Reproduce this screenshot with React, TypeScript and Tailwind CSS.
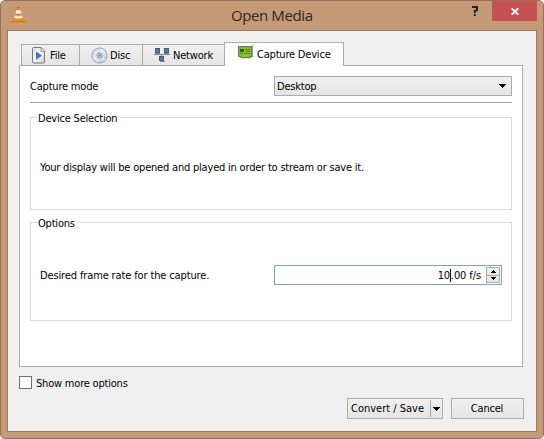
import React from "react";

const face = "border border-[#acacac] bg-linear-to-b from-[#f0f0f0] to-[#e5e5e5]";

function Cone() {
  return (
    <svg width="15" height="17" viewBox="0 0 15 17">
      <path d="M2.2 12h10.600l1.700 4H.5z" fill="#f38b13" />
      <path d="M.5 15.200h14v1H.5z" fill="#d96c05" />
      <path d="M6.300 1h2.200l3.500 11.500q-4.500 2.500-9 0z" fill="#ef8110" />
      <path d="M5.500 4h3.900l1 3.200q-3 1.200-5.900 0z" fill="#eeeeec" />
      <path d="M3.800 9.300q3.600 1.300 7.200 0l.8 2.500q-4.400 2-8.800 0z" fill="#e8e8e5" />
      <path d="M6.700 1h1.500l.3 1.200H6.300z" fill="#a06c4a" />
    </svg>
  );
}

function FileIcon() {
  return (
    <svg width="14" height="17" viewBox="0 0 14 17">
      <defs>
        <linearGradient id="paper" x1="0" y1="0" x2="1" y2="1">
          <stop offset="0" stopColor="#d8d8d8" />
          <stop offset=".5" stopColor="#f8f8f8" />
          <stop offset="1" stopColor="#cccccc" />
        </linearGradient>
      </defs>
      <path d="M1.500.500h8l3 3.500v11.500q0 .500-.500.500H2q-1.500 0-1.500-1V1.500q0-1 1-1z" fill="url(#paper)" stroke="#77797b" />
      <path d="M9 1v3.500h3.500" fill="#eee" stroke="#999" />
      <path d="M4 4.500l6 4-6 4.500z" fill="#367cc0" />
    </svg>
  );
}

function DiscIcon() {
  return (
    <svg width="17" height="17" viewBox="0 0 17 17">
      <defs>
        <linearGradient id="disc" x1="0" y1="0" x2="1" y2="1">
          <stop offset="0" stopColor="#b9c3dc" />
          <stop offset=".45" stopColor="#edf1f8" />
          <stop offset="1" stopColor="#a9b9d4" />
        </linearGradient>
      </defs>
      <circle cx="8.500" cy="8.500" r="7.600" fill="url(#disc)" stroke="#9299a8" strokeWidth=".9" />
      <path d="M3 4l4 3M10 10l4 3" stroke="#fff" />
      <circle cx="8.500" cy="8.500" r="2.600" fill="#d7d8df" stroke="#8c8d99" />
      <circle cx="8.500" cy="8.500" r="1" fill="#777" />
    </svg>
  );
}

function NetworkIcon() {
  return (
    <svg width="16" height="15" viewBox="0 0 16 15" shapeRendering="crispEdges">
      <path d="M0 6.500h16M1 5.500h5M10 5.500h5M7.500 7v2M5.500 13.500h5" stroke="#85878a" />
      <path d="M1.500.500h4v4h-4zM10.500.500h4v4h-4zM5.500 8.500h4v4h-4z" fill="#3e7fc4" stroke="#555b63" />
    </svg>
  );
}

function CardIcon() {
  return (
    <svg width="16" height="15" viewBox="0 0 16 15">
      <path d="M13.500 2V1h1.500V0M14.500 1.500v11" fill="none" stroke="#a0a0a0" />
      <path d="M.600 1.700h13v9.800h-1.500v1.200H3v-1.200H.600z" fill="#8bc427" stroke="#71795f" strokeWidth="1.200" />
      <path d="M2 4h4v3H2z" fill="#2f5f0d" />
      <path d="M7.500 4.500h4.500M7.500 6.500h4.500M2 8.500h3M6 8.500h6" stroke="#4b8219" />
    </svg>
  );
}

function Down() {
  return (
    <svg width="7" height="4" viewBox="0 0 7 4" shapeRendering="crispEdges">
      <path d="M0 0h7v1H6v1H5v1H4v1H3V3H2V2H1V1H0z" fill="#000" />
    </svg>
  );
}

function SpinButton({ up }: { up?: boolean }) {
  return (
    <div className={`flex flex-1 items-center justify-center ${up ? "" : "border-t border-[#acacac]"}`}>
      <svg width="5" height="3" viewBox="0 0 5 3" shapeRendering="crispEdges">
        <path d={up ? "M2 0h1v1h1v1h1v1H0V2h1V1h1z" : "M0 0h5v1H4v1H3v1H2V2H1V1H0z"} />
      </svg>
    </div>
  );
}

const tab = "flex h-[21px] items-center border-t border-[#acacac] bg-linear-to-b from-[#efefef] to-[#e5e5e5]";

export default function App() {
  return (
    <div className="h-[439px] w-[544px] overflow-hidden bg-white font-['DejaVu_Sans_Condensed','DejaVu_Sans',sans-serif] text-[11px] leading-[14px] tracking-[-0.2px] whitespace-nowrap text-black [font-stretch:condensed]">
      <div className="flex h-full flex-col rounded-[5px] border border-[#957259] bg-[#c49a77]">
        <header className="flex h-[29px] shrink-0 items-start">
          <div className="w-[230px] pt-[5px] pl-[10px]"><Cone /></div>
          <h1 className="w-[230px] pt-[4px] font-['Open_Sans',sans-serif] text-[15px] leading-[20px] tracking-[-0.4px] text-[#302721] [font-stretch:normal]">Open Media</h1>
          <div className="flex w-[31px] justify-center pt-[5px] pr-[4px]">
            <svg width="6" height="10" viewBox="0 0 6 10" className="shrink-0">
              <path d="M0 1h5v3L2.800 5v2" fill="none" stroke="#27211d" strokeWidth="2" />
              <path d="M1.800 8h2v2h-2z" fill="#27211d" />
            </svg>
          </div>
          <div className="flex h-[20px] w-[45px] items-center justify-center bg-[#c75050]">
            <svg width="8" height="7" viewBox="0 0 8 7"><path d="M.700.300l6.600 6.400M7.300.300L.700 6.700" stroke="#fff" strokeWidth="1.900" /></svg>
          </div>
        </header>
        <main className="ml-[6px] flex h-[402px] w-[530px] shrink-0 flex-col border border-[#a17b60] bg-[#f0f0f0] pl-[11px]">
          <nav className="flex h-[34px] shrink-0 items-end pl-[2px]">
            <div className={`${tab} w-[59px] border-x pl-[10px]`}>
              <FileIcon /><span className="ml-[4px] pt-[2px]">File</span>
            </div>
            <div className={`${tab} w-[63px] border-r pl-[11px]`}>
              <DiscIcon /><span className="ml-[2px] pt-[2px]">Disc</span>
            </div>
            <div className={`${tab} w-[81px] pl-[11px]`}>
              <NetworkIcon /><span className="ml-[3px] pt-[2px]">Network</span>
            </div>
            <div className="z-10 mb-[-1px] flex h-[24px] w-[120px] items-start border border-b-0 border-[#acacac] bg-white pt-[2px] pl-[13px]">
              <CardIcon /><span className="mt-[3px] ml-[3px]">Capture Device</span>
            </div>
          </nav>
          <section className="flex h-[302px] w-[504px] shrink-0 flex-col border border-[#acacac] bg-white px-[10px] pt-[10px]">
            <div className="flex h-[20px] shrink-0 items-center justify-between">
              <span className="pt-[2px]">Capture mode</span>
              <div className={`${face} flex h-[20px] w-[238px] items-center justify-between pr-[5px] pl-[2px]`}>
                <span className="pt-[2px]">Desktop</span><Down />
              </div>
            </div>
            <div className="mt-[6px] h-px shrink-0 bg-[#a0a0a0]" />
            <fieldset className="mt-[7px] h-[100px] shrink-0 border border-[#dcdcdc] px-[9px]">
              <legend className="ml-[-2px] h-[14px] pr-[3px] leading-[18px]">Device Selection</legend>
              <p className="pt-[37px]">Your display will be opened and played in order to stream or save it.</p>
            </fieldset>
            <fieldset className="mt-[5px] h-[106px] shrink-0 border border-[#dcdcdc] px-[9px]">
              <legend className="ml-[-2px] h-[14px] pr-[3px] leading-[18px]">Options</legend>
              <div className="mt-[36px] flex h-[20px] items-center justify-between">
                <span className="pt-[2px] tracking-[-0.13px]">Desired frame rate for the capture.</span>
                <div className="flex h-[20px] w-[228px] items-center justify-end border border-[#7aa4cf] bg-white pr-px">
                  <span className="pt-[2px]">10</span><i className="h-[13px] w-px bg-black" /><span className="pt-[2px] tracking-[-0.1px]">.00 f/s</span>
                  <div className={`${face} ml-[5px] flex h-[16px] w-[14px] flex-col`}><SpinButton up /><SpinButton /></div>
                </div>
              </div>
            </fieldset>
          </section>
          <label className="mt-[9px] flex h-[13px] items-center">
            <span className="mr-[4px] h-[13px] w-[13px] border border-[#707070] bg-white" />
            <span className="pt-[2px]">Show more options</span>
          </label>
          <footer className="mt-[9px] flex w-[505px] justify-end gap-[8px]">
            <button className={`${face} flex h-[21px] w-[96px] items-center pl-[3px]`}>
              <span className="w-[79px] pt-px text-left tracking-normal">Convert / Save</span>
              <span className="h-[17px] w-px bg-[#a5a5a5]" /><span className="ml-[2px]"><Down /></span>
            </button>
            <button className={`${face} h-[21px] w-[73px] pt-px pr-[1px]`}>Cancel</button>
          </footer>
        </main>
      </div>
    </div>
  );
}
